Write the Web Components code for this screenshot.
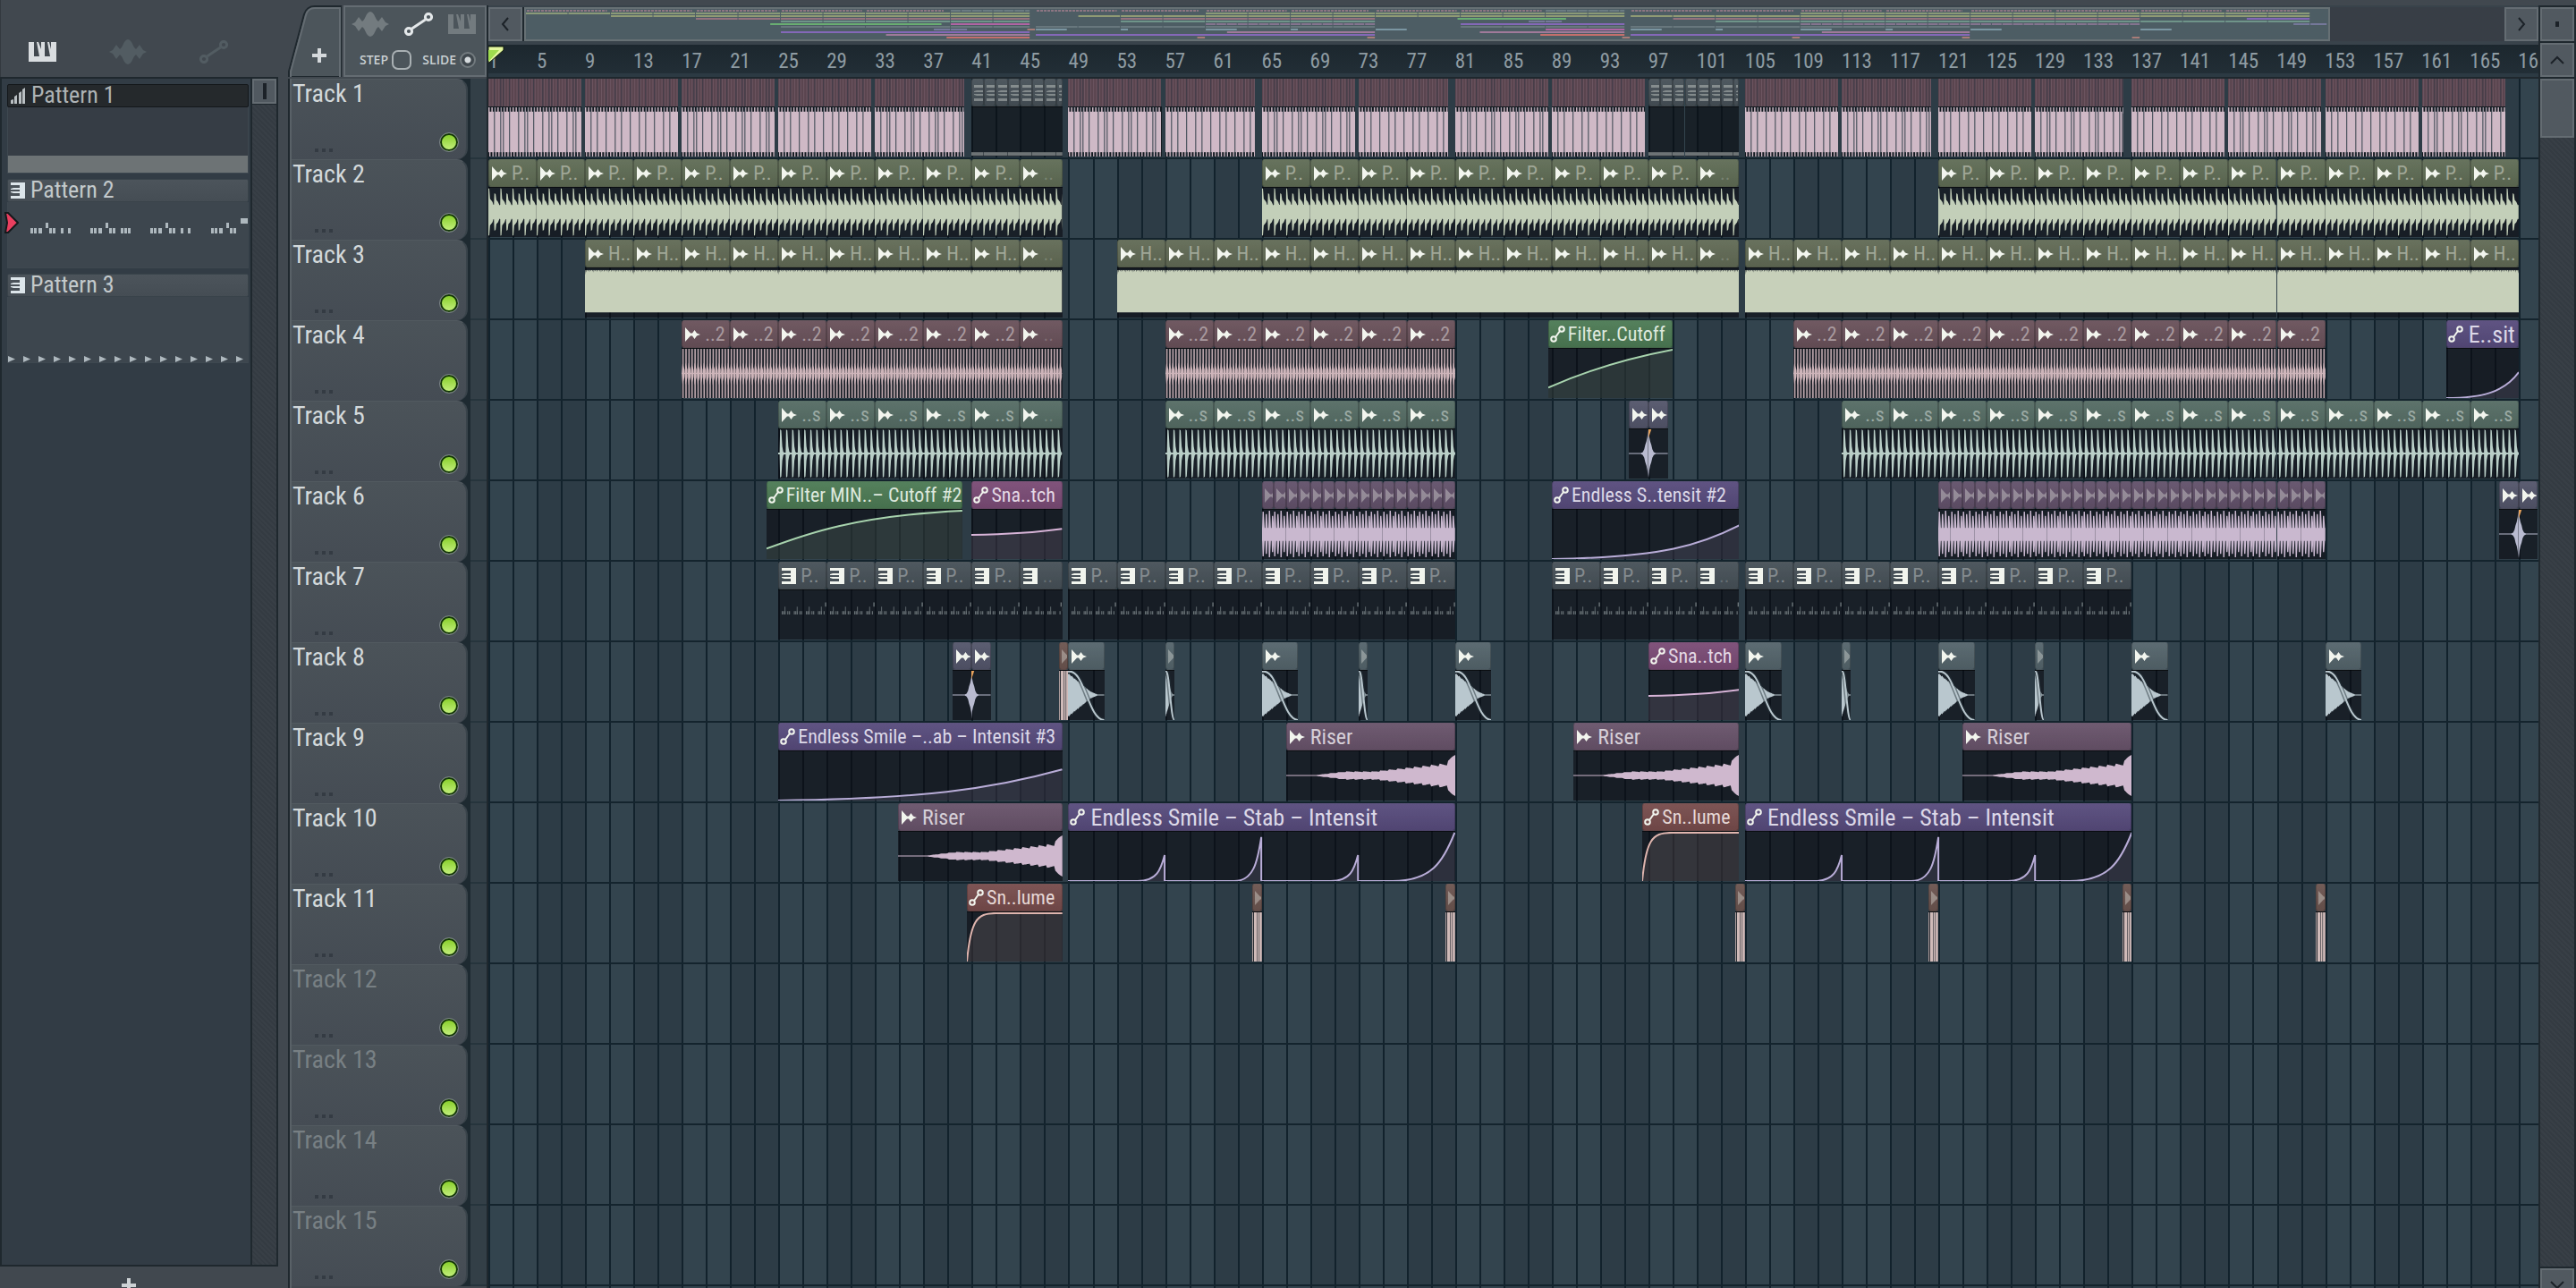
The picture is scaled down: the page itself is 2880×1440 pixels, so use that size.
<!DOCTYPE html>
<html lang="en">
<head>
<meta charset="utf-8">
<title>Playlist</title>
<style>
    html, body{
        margin: 0;
        height: 100%;
        overflow: hidden;
        background: #41484f;
        font-family: "Roboto Condensed", "Liberation Sans Narrow", "Liberation Sans", sans-serif;
        color: #d3d9db;
    }
</style>
</head>
<body>
<daw-window></daw-window>

<script>
// number of bars that fit in the visible part of the timeline
const BARS = 169.65;
const pct = n => (n / BARS * 100).toFixed(6) + '%';

const RESET = `
    *{ box-sizing: border-box; }
    button{
        padding: 0;
        border: 0;
        background: none;
        color: inherit;
        font: inherit;
        display: flex;
        align-items: center;
        justify-content: center;
    }
    input{ appearance: none; margin: 0; }
    svg{ display: block; }
`;

const ICONS = {
    wave: `<svg width="42" height="28" viewBox="0 0 42 28" fill="currentColor"><path d="M0 14L4 12L8 6L12 11L14 9L17 3Q21 -3 25 3L28 9L30 11L34 6L38 12L42 14L38 16L34 22L30 17L28 19L25 25Q21 31 17 25L14 19L12 17L8 22L4 16Z"/></svg>`,
    auto: `<svg width="32" height="26" viewBox="0 0 32 26" fill="none" stroke="currentColor" stroke-width="3"><circle cx="5" cy="21" r="3.6"/><circle cx="27" cy="5" r="3.6"/><path d="M8.500 18L23.500 8"/></svg>`,
    piano: `<svg width="31" height="22" viewBox="0 0 31 22" fill="currentColor"><path d="M0 0H6V16H12L9 0H11L14 8V16H14V0H18V16H24L21 0H23L25 8V0H31V22H0Z"/></svg>`,
    plus: `<svg width="16" height="16" viewBox="0 0 16 16" fill="currentColor"><path d="M6 0H10V6H16V10H10V16H6V10H0V6H6Z"/></svg>`,
    sample: `<svg width="17" height="16" viewBox="0 0 17 16" fill="currentColor"><path d="M0 0L6 6.500L8 6.500L10.500 3L13 6.500L17 8L13 9.500L10.500 13L8 9.500L6 9.500L0 16Z"/></svg>`,
    curve: `<svg width="17" height="19" viewBox="0 0 17 19" fill="none" stroke="currentColor" stroke-width="2"><circle cx="4" cy="15" r="2.800"/><circle cx="13" cy="4" r="2.800"/><path d="M6 13L11 6"/></svg>`,
    keys: `<svg width="16" height="18" viewBox="0 0 16 18" fill="currentColor"><path d="M0 0H16V18H0V15H10V12H3L0 11V10H10V8H0V7L3 6H10V3H0Z"/></svg>`,
    steps: `<svg width="17" height="18" viewBox="0 0 17 18" fill="currentColor"><path d="M0 14L3 13V18H0ZM4 10L7 8V18H4ZM9 6L12 4V18H9ZM13 2L16 0V18H13Z"/></svg>`,
    left: `<svg width="10" height="16" viewBox="0 0 10 16" fill="none" stroke="currentColor" stroke-width="2"><path d="M8 1L2 8L8 15"/></svg>`,
    right: `<svg width="10" height="16" viewBox="0 0 10 16" fill="none" stroke="currentColor" stroke-width="2"><path d="M2 1L8 8L2 15"/></svg>`,
    up: `<svg width="16" height="10" viewBox="0 0 16 10" fill="none" stroke="currentColor" stroke-width="2"><path d="M1 9L8 2L15 9"/></svg>`,
    down: `<svg width="16" height="10" viewBox="0 0 16 10" fill="none" stroke="currentColor" stroke-width="2"><path d="M1 1L8 8L15 1"/></svg>`
};

// kind: [icon, header colour, wave colour, label colour, overview colour]
const KINDS = {
    beat:   ['', '#5a454f', '#cfb9c6', '', '#8d7683'],
    step:   ['keys', '#465057', '#6d7375', '', '#6b7b82'],
    kick:   ['sample', '#5f6c55', '#c3cfb9', '#a0a797', '#8a9a78'],
    hat:    ['sample', '#616a55', '#c7d0ba', '#a0a797', '#8f9a74'],
    clap:   ['sample', '#69515a', '#ceb5ba', '#a99a9f', '#95737f'],
    shaker: ['sample', '#556c64', '#b9cec7', '#9aa9a3', '#6f9489'],
    stab:   ['sample', '#62516a', '#c9b8cf', '', '#84748f'],
    notes:  ['keys', '#465057', '#6f787c', '#848b8f', '#68777d'],
    noise:  ['sample', '#53556a', '#b9bbd0', '', '#75789a'],
    crash:  ['sample', '#54646b', '#b9c7ce', '', '#7b96a2'],
    roll:   ['sample', '#6b544f', '#cfbab8', '', '#a87c78'],
    riser:  ['sample', '#68536a', '#cfb8ce', '#d6cfd8', '#a07a9a'],
    green:  ['curve', '#4c7a54', '#a8d4ae', '#dde8dd', '#69ae72'],
    pink:   ['curve', '#7a4b75', '#d8b4d8', '#e4d8e4', '#b065a4'],
    violet: ['curve', '#574b7c', '#b9add8', '#dcd8e8', '#8468b8'],
    red:    ['curve', '#774c4c', '#dfb5ae', '#e6d8d6', '#c46f6c']
};

const CURVES = {
    cutoff: 'M0 45Q45 16 100 1',
    cutoff2: 'M0 45C20 28 45 7 100 1',
    snatch: 'M0 29Q60 28 100 22',
    short: 'M0 57C50 57 80 50 100 27',
    mid: 'M0 57C60 55 80 40 100 18',
    long: 'M0 57C50 55 75 44 100 21',
    saw: 'M0 57H18C23 57 24 44 25 27V57H43C48 57 49 35 50 6V57H68C73 57 74 44 75 27V57H84C94 57 97 35 100 1',
    volume: 'M0 57C4 10 10 1 30 1H100'
};

// repeats a sample every `size` bars between two bars
function run(kind, from, to, size, label){
    const out = [];
    for(let b = from; b < to; b += size){
        const len = Math.min(size, to - b);
        out.push([kind, b, len, label && len < size ? '..' : label]);
    }
    return out;
}

const beats = list => list.map(([a, b]) => ['beat', a, (b || a + 7.7) - a]);
const auto = (kind, from, to, label, curve) => [kind, from, to - from, label, curve];

const TRACKS = [
    [...beats([[1], [9], [17], [25], [33, 40.4], [49], [57, 64.4], [65], [73, 80.4], [81], [89],
        [105], [113, 120.4], [121], [129, 136.3], [137], [145], [153], [161, 167.9]]),
        ...run('step', 41, 48.5, 1), ...run('step', 97, 104.5, 1)],
    [...run('kick', 1, 48.5, 4, 'P..'), ...run('kick', 65, 104.5, 4, 'P..'), ...run('kick', 121, 169, 4, 'P..')],
    [...run('hat', 9, 48.5, 4, 'H..'), ...run('hat', 53, 104.5, 4, 'H..'), ...run('hat', 105, 169, 4, 'H..')],
    [...run('clap', 17, 48.5, 4, '..2'), ...run('clap', 57, 81, 4, '..2'), auto('green', 88.7, 99, 'Filter..Cutoff', 'cutoff'),
        ...run('clap', 109, 153, 4, '..2'), auto('violet', 163, 169, 'E..sit', 'short')],
    [...run('shaker', 25, 48.5, 4, '..s'), ...run('shaker', 57, 81, 4, '..s'),
        ['noise', 95.4, 1.6], ['noise', 97, 1.6], ...run('shaker', 113, 169, 4, '..s')],
    [auto('green', 24, 40.2, 'Filter MIN..– Cutoff #2', 'cutoff2'), auto('pink', 41, 48.5, 'Sna..tch', 'snatch'),
        ...run('stab', 65, 81, 1), auto('violet', 89, 104.5, 'Endless S..tensit #2', 'mid'),
        ...run('stab', 121, 153, 1), ['noise', 167.4, 1.6], ['noise', 169, 1.6]],
    [...run('notes', 25, 48.5, 4, 'P..'), ...run('notes', 49, 81, 4, 'P..'),
        ...run('notes', 89, 104.5, 4, 'P..'), ...run('notes', 105, 137, 4, 'P..')],
    [['noise', 39.4, 1.6], ['noise', 41, 1.6], ['roll', 48.2, .8], ['crash', 49, 3], ['crash', 57, .75],
        ['crash', 65, 3], ['crash', 73, .75], ['crash', 81, 3], auto('pink', 97, 104.5, 'Sna..tch', 'snatch'),
        ['crash', 105, 3], ['crash', 113, .75], ['crash', 121, 3], ['crash', 129, .75], ['crash', 137, 3], ['crash', 153, 3]],
    [auto('violet', 25, 48.5, 'Endless Smile –..ab – Intensit #3', 'long'), ['riser', 67, 14, 'Riser'],
        ['riser', 90.8, 13.7, 'Riser'], ['riser', 123, 14, 'Riser']],
    [['riser', 34.9, 13.6, 'Riser'], auto('violet', 49, 81, 'Endless Smile – Stab – Intensit', 'saw'),
        auto('red', 96.5, 104.5, 'Sn..lume', 'volume'), auto('violet', 105, 137, 'Endless Smile – Stab – Intensit', 'saw')],
    [auto('red', 40.6, 48.5, 'Sn..lume', 'volume'), ['roll', 64.2, .8], ['roll', 80.2, .8], ['roll', 104.2, .8],
        ['roll', 120.2, .8], ['roll', 136.2, .8], ['roll', 152.2, .8]],
    [], [], [], []
];

// closed shape mirrored round the middle line, from [x, amplitude] pairs
function mirror(points, mid = 28, size = 28){
    const top = points.map(([x, a]) => x + ' ' + (mid - a * size).toFixed(1));
    const low = points.map(([x, a]) => x + ' ' + (mid + a * size).toFixed(1)).reverse();
    return `<path d="M${ top.join('L') }L${ low.join('L') }Z"/>`;
}

// waves are drawn with 100 units to a bar and 57 units of height
const WAVES = {
    beat(w){
        let d = '';
        for(let x = 0; x < w; x += 25){
            d += `M${ x } 7V0H${ x + 11 }V7ZM${ x + 8 } 50V57H${ x + 18 }V50Z`;
        }
        return `<rect y="5" width="${ w }" height="47"/><path d="${ d }"/>`;
    },
    step(w){
        return `<rect y="52" width="${ w }" height="4"/>`;
    },
    kick(w){
        const shape = [[0, .98], [8, .96], [14, .55], [34, .42], [42, .3], [46, .3], [50, .78], [60, .74], [66, .5], [80, .42], [92, .28], [98, .3]];
        const pts = [];
        for(let x = 0; x < w; x += 100){
            shape.forEach(([dx, a]) => pts.push([Math.min(w, x + dx), a]));
        }
        return mirror(pts);
    },
    hat(w){
        const pts = [];
        for(let x = 4; x < w; x += 12){
            pts.push(x + ' 2', (x + 7) + ' 2', (x + 9) + ' ' + (3 + x % 5 / 2));
        }
        return `<path d="M0 8L${ pts.join('L') }L${ w } 6V51H0Z"/>`;
    },
    clap(w){
        let d = '';
        let core = '';
        for(let x = 6; x < w; x += 25){
            d += `M${ x } 0H${ x + 12 }V57H${ x }Z`;
            core += `M${ x - 5 } 28L${ x + 2 } 16L${ x + 18 } 24V33L${ x + 2 } 42Z`;
        }
        return `<path d="${ d }" opacity=".9"/><path d="${ core }"/><rect y="28" width="${ w }" height="1"/>`;
    },
    shaker(w){
        const pts = [];
        for(let x = 0; x < w; x += 50){
            pts.push([x, .04], [x + 12, .04], [x + 16, 1], [x + 26, .95], [x + 34, .3], [x + 42, .08]);
        }
        pts.push([w, .04]);
        return mirror(pts);
    },
    stab(w){
        let d = '';
        [0, 26, 52, 78].forEach((x, i) => {
            const t = [2, 5, 1, 7][i];
            d += `M${ x } 22L${ x + 4 } ${ t }H${ x + 14 }L${ x + 22 } 22V34L${ x + 14 } ${ 56 - t }H${ x + 4 }L${ x } 34Z`;
        });
        return `<path d="${ d }"/><rect y="21" width="${ w }" height="15"/>`;
    },
    notes(w){
        let d = '';
        for(let x = 0; x < w; x += 100){
            [0, 12, 24, 46, 60].forEach(dx => {
                if(x + dx < w - 44) d += `M${ x + dx + 30 } 24h8v4h-8Z`;
            });
            d += `M${ x + 54 } 19h6v5h-6Z`;
        }
        return `<path d="${ d }M${ w - 12 } 14h10v5h-10Z"/>`;
    },
    noise(w, el){
        const out = [[0, 1], [6, .7], [14, .5], [24, .35], [32, .18], [44, .06], [60, .02], [160, .02]];
        const flip = el.start % 1 !== 0;
        const tick = flip ? '' : '<path d="M0 0H24L0 10Z" fill="#e8a35c"/>';
        return mirror(flip ? out.map(([x, a]) => [160 - x, a]).reverse() : out) + tick;
    },
    crash(w){
        const pts = [];
        for(let i = 0; i <= 60; i++){
            const p = i / 60;
            const a = p < .62 ? 1 - p * 1.35 : Math.max(.02, .16 - (p - .62) * .7);
            pts.push([Math.round(p * w), Math.max(.02, a * (.86 + (i * 7 % 5) * .02))]);
        }
        const fade = `M0 1C${ w * .45 } -4 ${ w * .55 } 57 ${ w } 57`;
        return mirror(pts) + `<path d="${ fade }" fill="none" stroke="#26333a" stroke-width="5" vector-effect="non-scaling-stroke" opacity=".5"/><path d="${ fade }" fill="none" stroke="#b9c7ce" stroke-width="2" vector-effect="non-scaling-stroke"/>`;
    },
    roll(w){
        return `<path d="M0 0H6V57H0ZM14 0H38V57H14ZM42 0H56V57H42ZM60 0H${ w }V57H60Z"/>`;
    },
    riser(w){
        const pts = [[0, .02]];
        for(let i = 22; i <= 140; i++){
            const p = i / 140;
            const grow = p < .35 ? (p - .15) * .8 : p < .52 ? .16 : p < .95 ? .16 + (p - .52) * .72 : .47 + (p - .95) * 10;
            pts.push([Math.round(p * w), Math.max(.02, grow * (.88 + (i * 13 % 7) * .04))]);
        }
        return mirror(pts);
    }
};

class DawButton extends HTMLElement{
connectedCallback(){
    this.attachShadow({ mode: 'open' });
    this.shadowRoot.innerHTML = `
    <style>
    ${ RESET }
    :host{ display: flex; }
    button{
        flex: 1;
        border: 2px solid #646c72;
        background: #515960;
        color: #1c2228;
    }
    </style>
    <button aria-label="${ this.getAttribute('label') }"><slot></slot></button>
    `;
}
}

class PatternCard extends HTMLElement{
connectedCallback(){
    const kind = this.getAttribute('kind');
    this.attachShadow({ mode: 'open' });
    this.shadowRoot.innerHTML = `
    <style>
    ${ RESET }
    :host{ display: block; }
    button{
        width: 100%;
        height: 26px;
        gap: 6px;
        justify-content: flex-start;
        padding-left: 3px;
        border-radius: 2px;
        border: 1px solid #39434a;
        background: linear-gradient(#4c545b, #454d54);
        font-size: 26px;
        line-height: 22px;
        color: #c3c9cb;
    }
    button svg{ color: #dce5ea; }
    slot{ display: block; height: 24px; }
    :host([kind=steps]) button{ background: #25292c; border-color: #14181b; color: #aeb3b5; }
    :host([kind=steps]) button svg{ color: #b9bfc2; }
    .body{
        height: 74px;
        border: 1px solid #3e4850;
        border-top: 0;
        background: #3d464e;
    }
    :host([kind=steps]) .body{ background: #363d45; }
    </style>
    <button>${ ICONS[kind] }<slot></slot></button>
    <div class="body"><svg width="268" height="74" fill="#aeb8be">${ this.preview() }</svg></div>
    `;
}

preview(){
    const name = this.getAttribute('preview');
    let d = '';
    if(name === 'bar') return '<path fill="#6d7375" d="M0 54H268V73H0Z"/>';
    if(name === 'notes'){
        [25, 92, 159, 227].forEach((x, i) => {
            d += `M${ x } 29h3v6h-3ZM${ x + 4 } 29h3v6h-3ZM${ x + 9 } 29h4v6h-4ZM${ x + 17 } 23h3v6h-3ZM${ x + 21 } 29h3v6h-3ZM${ x + 25 } 29h3v6h-3Z`;
            if(i === 1) d += `M${ x + 34 } 29h3v6h-3ZM${ x + 38 } 29h3v6h-3ZM${ x + 42 } 29h3v6h-3Z`;
            else if(i < 3) d += `M${ x + 34 } 29h3v6h-3ZM${ x + 42 } 29h3v6h-3Z`;
        });
        return `<path d="${ d }M260 18h8v6h-8Z"/>`;
    }
    for(let i = 0; i < 16; i++) d += `M${ i * 17 } 66L${ i * 17 + 8 } 69.500L${ i * 17 } 73Z`;
    return `<path d="${ d }"/>`;
}
}

class PatternPicker extends HTMLElement{
connectedCallback(){
    this.attachShadow({ mode: 'open' });
    this.shadowRoot.innerHTML = `
    <style>
    ${ RESET }
    :host{ display: grid; grid-template-rows: 86px 1fr 24px; }
    nav{
        display: flex;
        align-items: flex-end;
        justify-content: space-between;
        padding: 0 56px 12px 31px;
        border-left: 1px solid #33393f;
        color: #525c62;
    }
    nav button{ height: 32px; }
    nav button:first-child{ color: #d9dde0; }
    main{
        display: flex;
        border: 2px solid #1f282e;
        background: #323c45;
        min-height: 0;
    }
    .list{
        flex: 1;
        display: flex;
        flex-direction: column;
        gap: 6px;
        padding: 6px 2px 0 6px;
        position: relative;
    }
    .now{ position: absolute; left: 3px; top: 149px; }
    .bar{
        width: 29px;
        border-left: 2px solid #1f282e;
        background: repeating-linear-gradient(45deg, #383f46 0 2px, #343b42 2px 4px);
    }
    daw-button{ height: 29px; border-bottom: 1px solid #1f282e; }
    i{ width: 4px; height: 18px; background: #1c2228; }
    .add{ padding: 13px 24px 0 0; align-items: flex-start; color: #cdd2d5; }
    </style>
    <nav>
        <button aria-label="Patterns">${ ICONS.piano }</button>
        <button aria-label="Audio clips">${ ICONS.wave }</button>
        <button aria-label="Automation clips">${ ICONS.auto }</button>
    </nav>
    <main>
        <div class="list">
            <pattern-card kind="steps" preview="bar">Pattern 1</pattern-card>
            <pattern-card kind="keys" preview="notes">Pattern 2</pattern-card>
            <pattern-card kind="keys" preview="arrows">Pattern 3</pattern-card>
            <svg class="now" width="16" height="24" viewBox="0 0 16 24"><path d="M1 1H4L15 12L4 23H1L3 12Z" fill="#ea3f5f" stroke="#15191c" stroke-width="2"/></svg>
        </div>
        <div class="bar"><daw-button label="Scroll patterns"><i></i></daw-button></div>
    </main>
    <button class="add" aria-label="Add pattern">${ ICONS.plus }</button>
    `;
}
}

class TrackHead extends HTMLElement{
connectedCallback(){
    this.attachShadow({ mode: 'open' });
    this.shadowRoot.innerHTML = `
    <style>
    ${ RESET }
    :host{
        display: grid;
        grid-template-columns: 1fr 18px;
        height: 90px;
        background: #1e2a31;
    }
    .head{
        display: flex;
        flex-direction: column;
        justify-content: space-between;
        margin-right: 3px;
        padding: 1px 8px 8px 1px;
        border-right: 2px solid #39434a;
        border-top: 1px solid #525a60;
        border-radius: 0 12px 12px 0;
        background: linear-gradient(#4b5359, #454c54);
        color: #d3d9db;
        font-size: 28px;
        line-height: 30px;
    }
    :host([empty]) .head{ color: #788084; }
    .row{ display: flex; align-items: flex-end; justify-content: space-between; padding-left: 25px; }
    .dots{ display: flex; gap: 4px; }
    .dots i{ width: 4px; height: 4px; background: #343b43; }
    input{
        width: 22px;
        height: 22px;
        border-radius: 50%;
        border: 1px solid #7b8487;
        background: linear-gradient(#82cc22, #c9f285) padding-box;
        box-shadow: inset 0 0 0 2px #123408;
    }
    .gap{ background: #333f47; border-bottom: 2px solid #26343c; }
    </style>
    <div class="head">
        <slot></slot>
        <div class="row">
            <span class="dots"><i></i><i></i><i></i></span>
            <input type="checkbox" checked aria-label="Enable ${ this.textContent }">
        </div>
    </div>
    <div class="gap"></div>
    `;
}
}

class PlaylistClip extends HTMLElement{
get start(){
    return Number(this.getAttribute('start'));
}

connectedCallback(){
    const kind = this.getAttribute('kind');
    const len = Number(this.getAttribute('length'));
    const [icon, head, wave, text] = KINDS[kind];
    const size = len < 1.5 ? 'tiny' : len > 25 || len === 6 ? 'loose' : '';
    this.attachShadow({ mode: 'open' });
    this.style.left = pct(this.start - 1);
    this.style.width = pct(len);
    this.shadowRoot.innerHTML = `
    <style>
    ${ RESET }
    :host{
        display: flex;
        flex-direction: column;
        position: absolute;
        top: 0;
        bottom: 1px;
        overflow: hidden;
    }
    .title{
        display: flex;
        align-items: center;
        flex: 0 0 31px;
        gap: 3px;
        padding-left: 1px;
        overflow: hidden;
        white-space: nowrap;
        border-radius: 3px;
        border: 1px solid #0003;
        border-top-color: #ffffff14;
        background: linear-gradient(#ffffff0c, #00000014) ${ head };
        color: ${ text };
        font-size: 22px;
        line-height: 26px;
    }
    .title svg{ flex: none; color: #f2f5ee; }
    .sample, .keys{ gap: 5px; padding-left: 3px; }
    .riser{ gap: 6px; font-size: 24px; }
    .loose{ gap: 6px; font-size: 26px; line-height: 28px; }
    .cut{ color: #ffffff30; }
    .tiny{ padding-left: 2px; }
    .tiny svg{ opacity: .35; }
    .body{ flex: 1; min-height: 0; border-top: 1px solid #0008; background: #08090f99; }
    .body svg{ width: 100%; height: 100%; fill: ${ wave }; }
    .beat{ padding: 0; border: 0; border-radius: 0; background: none; }
    .beat svg{ width: 100%; height: 100%; }
    .beatbody{ background: #12191f; border-top: 1px solid #12191f; }
    .stepbody{ background: #0a0d12a0; }
    </style>
    <div class="title ${ icon } ${ kind } ${ size } ${ this.textContent === '..' ? 'cut' : '' }">
        ${ kind === 'beat' ? this.stripes(len * 100, head, 31) : ICONS[icon] }<slot></slot>
    </div>
    <div class="body ${ kind }body">${ this.draw(kind, len) }</div>
    `;
}

// the chopped loop repeats every two bars
cuts(w){
    const out = [];
    for(let x = 0; x < w; x += 200){
        [47, 99, 121, 172].forEach((c, i) => {
            if((i !== 2 || this.start % 16 === 1) && x + c < w) out.push(x + c);
        });
    }
    return out;
}

stripes(w, colour, h){
    let lines = '';
    for(let x = 8; x < w; x += 25) lines += `M${ x } 0h8v${ h }h-8Z`;
    return `<svg viewBox="0 0 ${ w } ${ h }" preserveAspectRatio="none">
        <rect width="${ w }" height="${ h }" fill="${ colour }"/>
        <path d="${ lines }" fill="#7c626f" opacity=".55"/>
        ${ this.cuts(w).map(x => `<rect x="${ x }" width="7" height="${ h }" fill="#3c3b47"/>`).join('') }
    </svg>`;
}

draw(kind, len){
    const curve = this.getAttribute('curve');
    const wave = KINDS[kind][2];
    if(curve){
        const d = CURVES[curve];
        return `<svg viewBox="0 0 100 57" preserveAspectRatio="none"><path d="${ d }V57H0Z" fill="${ wave }" opacity=".14"/><path d="${ d }" fill="none" stroke="${ wave }" stroke-width="2" vector-effect="non-scaling-stroke"/></svg>`;
    }
    const w = Math.round(len * 100);
    const gaps = kind === 'beat' ? this.cuts(w).map(x => `<rect x="${ x }" width="7" height="57" fill="#2c3b45"/>`).join('') : '';
    return `<svg viewBox="0 0 ${ w } 57" preserveAspectRatio="none">${ WAVES[kind](w, this) }${ gaps }</svg>`;
}
}

class PlaylistGrid extends HTMLElement{
connectedCallback(){
    this.attachShadow({ mode: 'open' });
    this.shadowRoot.innerHTML = `
    <style>
    :host{ display: block; position: relative; background: #2d3c46; overflow: hidden; }
    .bars{ position: absolute; inset: 0; width: 100%; height: 100%; }
    .lane{ position: relative; height: 90px; box-sizing: border-box; border-bottom: 2px solid #14242d; }
    </style>
    <svg class="bars" shape-rendering="crispEdges">${ this.bars() }</svg>
    ${ TRACKS.map(clips => `<div class="lane">${ clips.map(this.clip).join('') }</div>`).join('') }
    `;
}

bars(){
    let out = '';
    for(let b = 0; b < BARS; b += 8) out += `<rect x="${ pct(b) }" width="${ pct(4) }" height="100%" fill="#33444e"/>`;
    for(let b = 0; b < BARS; b += 2) out += `<rect x="${ pct(b) }" width="2" height="100%" fill="#12222c"/>`;
    return out;
}

clip([kind, start, length, label, curve]){
    return `<playlist-clip kind="${ kind }" start="${ start }" length="${ length }"${ curve ? ` curve="${ curve }"` : '' }>${ label || '' }</playlist-clip>`;
}
}

class PlaylistRuler extends HTMLElement{
connectedCallback(){
    let marks = '';
    for(let b = 1; b < BARS; b += 4) marks += `<span>${ b }</span>`;
    this.attachShadow({ mode: 'open' });
    this.shadowRoot.innerHTML = `
    <style>
    :host{
        display: flex;
        position: relative;
        overflow: hidden;
        border-bottom: 4px solid #2c3a43;
        background: linear-gradient(#1c272e, #222e36);
        color: #8e9ba2;
        font-size: 23px;
        line-height: 38px;
    }
    span{ flex: 0 0 ${ pct(4) }; box-sizing: border-box; white-space: nowrap; }
    svg{ position: absolute; left: 0; top: 1px; }
    </style>
    ${ marks }
    <svg width="18" height="20" viewBox="0 0 18 20"><path d="M0 1H17V5L1 19H0Z" fill="#e4f7a0" stroke="#14200c"/><path d="M0 5H12L1 17H0Z" fill="#9fdc4e"/></svg>
    `;
}
}

class PlaylistOverview extends HTMLElement{
connectedCallback(){
    this.attachShadow({ mode: 'open' });
    this.shadowRoot.innerHTML = `
    <style>
    :host{ display: block; background: #383e46; }
    div{
        width: 91%;
        height: 34px;
        border: 2px solid #667074;
        background: #4d5d64;
    }
    svg{ display: block; width: 100%; height: 34px; }
    </style>
    <div><svg>${ TRACKS.map(this.row).join('') }</svg></div>
    `;
}

row(clips, i){
    return clips.map(([kind, start, len]) => {
        const beat = kind === 'beat';
        const rect = `<rect x="${ pct(start - 1) }" y="${ i * 3 + 1 }" width="${ pct(len - .08) }" height="2" fill="${ KINDS[kind][4] }"/>`;
        const dots = beat ? `<line x1="${ pct(start - 1) }" x2="${ pct(start - 1 + len) }" y1="2" y2="2" stroke="#4d5d64" stroke-width="2" stroke-dasharray="1 3"/>` : '';
        return rect + dots;
    }).join('');
}
}

class PlaylistTools extends HTMLElement{
connectedCallback(){
    this.attachShadow({ mode: 'open' });
    this.shadowRoot.innerHTML = `
    <style>
    ${ RESET }
    :host{ display: flex; }
    .tab{ position: relative; width: 60px; padding: 32px 0 0 10px; color: #d5d9dc; }
    .tab .shape{ position: absolute; left: 0; top: 0; z-index: -1; }
    .tab svg{ position: relative; }
    .box{
        flex: 1;
        display: flex;
        flex-direction: column;
        justify-content: space-between;
        margin-left: 2px;
        padding: 3px 10px 4px 7px;
        border: 2px solid #646c72;
        background: #4c555b;
        color: #737b7f;
    }
    .box div{ display: flex; align-items: center; justify-content: space-between; height: 32px; }
    .box .opts{ padding-left: 9px; height: 26px; }
    .on{ color: #e4e8ea; }
    label{
        display: flex;
        align-items: center;
        gap: 4px;
        color: #c9cfd2;
        font: 600 14px/20px "Open Sans", sans-serif;
    }
    input[type=checkbox]{ width: 22px; height: 22px; border: 2px solid #a9b0b3; border-radius: 7px; }
    input[type=radio]{
        width: 18px;
        height: 18px;
        border-radius: 50%;
        border: 2px solid #737b7f;
        background: radial-gradient(circle, #d5dadd 3px, #3f474d 4px);
    }
    </style>
    <button class="tab" aria-label="Add track">
        <svg class="shape" width="60" height="80" viewBox="0 0 60 80"><path d="M1 80V74L18 10Q21 1 30 1H60V80Z" fill="#4c555b" stroke="#1f282e" stroke-width="2"/><path d="M3 80V74L20 11Q22 3 30 3H58V80" fill="none" stroke="#646c72" stroke-width="2"/></svg>
        ${ ICONS.plus }
    </button>
    <div class="box">
        <div>
            <button aria-label="Audio">${ ICONS.wave }</button>
            <button class="on" aria-label="Automation">${ ICONS.auto }</button>
            <button aria-label="Patterns">${ ICONS.piano }</button>
        </div>
        <div class="opts">
            <label>STEP<input type="checkbox"></label>
            <label>SLIDE<input type="radio" checked></label>
        </div>
    </div>
    `;
}
}

class PlaylistView extends HTMLElement{
connectedCallback(){
    this.attachShadow({ mode: 'open' });
    this.shadowRoot.innerHTML = `
    <style>
    ${ RESET }
    :host{
        display: grid;
        grid-template-columns: 222px 1fr 40px;
        grid-template-rows: 82px 1fr;
        padding-top: 6px;
    }
    playlist-tools{ padding: 0 0 2px; isolation: isolate; }
    .top{
        display: grid;
        grid-template-rows: 38px 36px;
        gap: 4px;
        padding-top: 2px;
        border: 0 solid #1f282e;
        border-width: 0 2px;
        background: #39434b;
        border-bottom: 2px solid #1f282e;
    }
    .scroll{ display: grid; grid-template-columns: 38px 1fr 38px; gap: 2px; background: #1f282e; }
    .scroll playlist-overview{ margin-right: -2px; }
    .side{ display: grid; grid-template-rows: 38px 38px; gap: 2px; padding: 2px 2px 2px 0; background: #1f282e; }
    .heads{
        overflow: hidden;
        border-left: 2px solid #1f282e;
        box-shadow: inset 2px 0 #596167;
        padding-left: 2px;
    }
    playlist-grid{ border: 0 solid #1f282e; border-width: 0 2px; }
    .bar{
        display: flex;
        flex-direction: column;
        justify-content: space-between;
        border-right: 2px solid #1f282e;
        background: repeating-linear-gradient(45deg, #383f46 0 2px, #343b42 2px 4px);
    }
    .thumb{ height: 66px; }
    .end{ height: 24px; overflow: hidden; border-top: 2px solid #1f282e; }
    .end daw-button{ height: 38px; }
    i{ width: 4px; height: 6px; background: #1c2228; }
    </style>
    <playlist-tools></playlist-tools>
    <div class="top">
        <div class="scroll">
            <daw-button label="Scroll left">${ ICONS.left }</daw-button>
            <playlist-overview></playlist-overview>
            <daw-button label="Scroll right">${ ICONS.right }</daw-button>
        </div>
        <playlist-ruler></playlist-ruler>
    </div>
    <div class="side">
        <daw-button label="Zoom"><i></i></daw-button>
        <daw-button label="Scroll up">${ ICONS.up }</daw-button>
    </div>
    <div class="heads">
        ${ TRACKS.map((clips, i) => `<track-head${ clips.length ? '' : ' empty' }>Track ${ i + 1 }</track-head>`).join('') }
    </div>
    <playlist-grid></playlist-grid>
    <div class="bar">
        <daw-button class="thumb" label="Vertical scroll"></daw-button>
        <div class="end"><daw-button label="Scroll down">${ ICONS.down }</daw-button></div>
    </div>
    `;
}
}

class DawWindow extends HTMLElement{
connectedCallback(){
    this.attachShadow({ mode: 'open' });
    this.shadowRoot.innerHTML = `
    <style>
    :host{
        display: grid;
        grid-template-columns: 310px 1fr;
        grid-template-rows: 100vh;
        gap: 12px;
        background: #41484f;
    }
    </style>
    <pattern-picker></pattern-picker>
    <playlist-view></playlist-view>
    `;
}
}

customElements.define('daw-button', DawButton);
customElements.define('pattern-card', PatternCard);
customElements.define('pattern-picker', PatternPicker);
customElements.define('track-head', TrackHead);
customElements.define('playlist-clip', PlaylistClip);
customElements.define('playlist-grid', PlaylistGrid);
customElements.define('playlist-ruler', PlaylistRuler);
customElements.define('playlist-overview', PlaylistOverview);
customElements.define('playlist-tools', PlaylistTools);
customElements.define('playlist-view', PlaylistView);
customElements.define('daw-window', DawWindow);
</script>
</body>
</html>
